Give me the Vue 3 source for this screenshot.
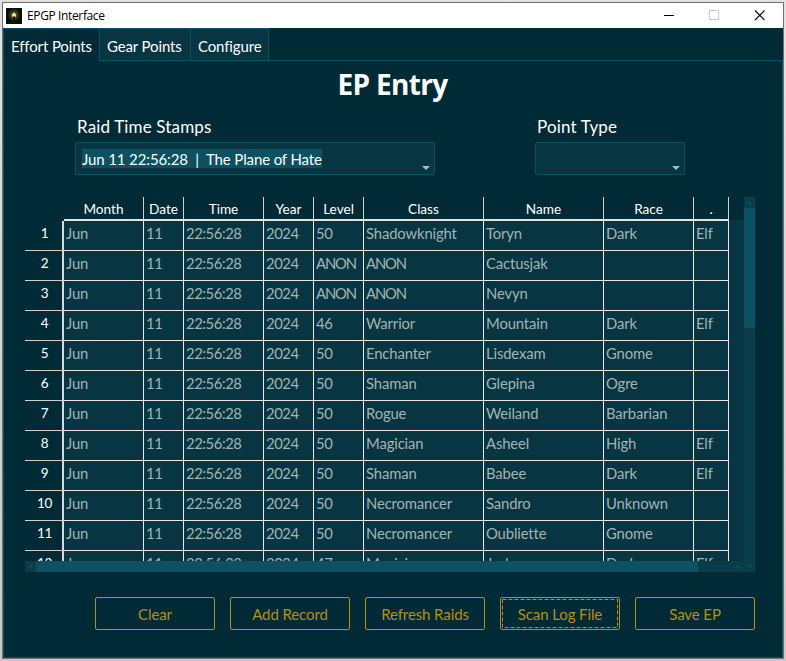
<script setup>
const tabs = [
  { label: 'Effort Points', cls: 'effort' },
  { label: 'Gear Points', cls: 'gear' },
  { label: 'Configure', cls: 'configure' },
]
const columns = ['Month', 'Date', 'Time', 'Year', 'Level', 'Class', 'Name', 'Race', '.']
const members = [
  ['50', 'Shadowknight', 'Toryn', 'Dark', 'Elf'],
  ['ANON', 'ANON', 'Cactusjak', '', ''],
  ['ANON', 'ANON', 'Nevyn', '', ''],
  ['46', 'Warrior', 'Mountain', 'Dark', 'Elf'],
  ['50', 'Enchanter', 'Lisdexam', 'Gnome', ''],
  ['50', 'Shaman', 'Glepina', 'Ogre', ''],
  ['50', 'Rogue', 'Weiland', 'Barbarian', ''],
  ['50', 'Magician', 'Asheel', 'High', 'Elf'],
  ['50', 'Shaman', 'Babee', 'Dark', 'Elf'],
  ['50', 'Necromancer', 'Sandro', 'Unknown', ''],
  ['50', 'Necromancer', 'Oubliette', 'Gnome', ''],
  ['47', 'Magician', 'Jasker', 'Dark', 'Elf'],
]
const rows = members.map((m) => ['Jun', '11', '22:56:28', '2024', ...m])
const actions = ['Clear', 'Add Record', 'Refresh Raids', 'Scan Log File', 'Save EP']
const spacing = (v) => ({ anon: v === 'ANON', digits: /^\d/.test(v) })
</script>

<template>
  <div class="desktop">
    <div class="window">
      <header class="titlebar">
        <svg class="app-icon" width="16" height="16" viewBox="0 0 16 16">
          <defs>
            <radialGradient id="glow">
              <stop offset="0" stop-color="#d09a38" />
              <stop offset=".45" stop-color="#4e4312" />
              <stop offset="1" stop-color="#06140f" />
            </radialGradient>
          </defs>
          <rect width="16" height="16" fill="#03100f" />
          <ellipse cx="8" cy="7" rx="6" ry="6.5" fill="url(#glow)" />
          <path d="M6 9V6.5L8 4.5l2 2V9L8 7.5z" fill="#ffe0a0" />
          <path d="M7.3 9h1.4l.8 6h-3z" fill="#171108" />
        </svg>
        <span class="caption">EPGP Interface</span>
        <svg class="controls" width="103" height="11" viewBox="0 0 103 11" shape-rendering="crispEdges">
          <path d="M0 5.5h10" stroke="#000" />
          <rect x="45.5" y=".5" width="9" height="9" fill="none" stroke="#ccc" />
          <path d="M91 .5l9.5 9.5M100.5 .5L91 10" stroke="#000" stroke-width="1.1" shape-rendering="auto" />
        </svg>
      </header>

      <nav class="tabs">
        <div v-for="t in tabs" :key="t.label" class="tab" :class="t.cls"><span>{{ t.label }}</span></div>
        <div class="tab-rest"></div>
      </nav>

      <main class="pane">
        <h1>EP Entry</h1>
        <div class="fields">
          <div class="field raid">
            <label>Raid Time Stamps</label>
            <div class="combo">
              <span class="selected">Jun 11 22:56:28&nbsp; |&nbsp; The Plane of Hate</span>
              <svg class="arrow" width="8" height="4" viewBox="0 0 8 4"><path d="M0 0h8L4 4z" /></svg>
            </div>
          </div>
          <div class="field type">
            <label>Point Type</label>
            <div class="combo">
              <svg class="arrow" width="8" height="4" viewBox="0 0 8 4"><path d="M0 0h8L4 4z" /></svg>
            </div>
          </div>
        </div>

        <section class="sheet">
          <div class="view">
            <div class="row head">
              <div class="index"></div>
              <div v-for="c in columns" :key="c" class="cell">{{ c }}</div>
            </div>
            <div class="body">
              <div v-for="(r, i) in rows" :key="i" class="row">
                <div class="index">{{ i + 1 }}</div>
                <div v-for="(v, j) in r" :key="j" class="cell" :class="spacing(v)">{{ v }}</div>
              </div>
            </div>
          </div>
          <div class="vbar">
            <div class="step"><svg width="5" height="3" viewBox="0 0 5 3"><path d="M0 3h5L2.5 0z" /></svg></div>
            <div class="thumb"></div>
          </div>
          <div class="hbar">
            <div class="step"><svg width="3" height="5" viewBox="0 0 3 5"><path d="M3 0v5L0 2.5z" /></svg></div>
            <div class="thumb"></div>
            <div class="step end"><svg width="3" height="5" viewBox="0 0 3 5"><path d="M0 0v5l3-2.5z" /></svg></div>
          </div>
          <div class="step corner"><svg width="6" height="3" viewBox="0 0 6 3"><path d="M0 0h6L3 3z" /></svg></div>
        </section>

        <div class="actions">
          <button v-for="a in actions" :key="a">
            {{ a }}
            <svg v-if="a === 'Scan Log File'" class="focus" width="116" height="29" viewBox="0 0 116 29">
              <rect x=".5" y=".5" width="115" height="28" />
            </svg>
          </button>
        </div>
      </main>
    </div>
  </div>
</template>

<style>
body { margin: 0; background: #d6d6d6; }
</style>

<style scoped>
* { box-sizing: border-box; }
.desktop {
  width: 786px; height: 661px; padding: 2px; overflow: hidden;
  background: linear-gradient(#e2e2e2, #c8c8c8);
  font-family: Lato, "Liberation Sans", sans-serif; font-size: 15px; color: #fff;
}
.window { width: 782px; height: 657px; border: 1px solid #6f6f6f; background: #002b36; display: flex; flex-direction: column; }
.titlebar { height: 25px; background: #fff; display: flex; align-items: center; padding-left: 3px; flex: none; }
.caption { margin-left: 5px; color: #000; font: 12px/16px "Open Sans", sans-serif; letter-spacing: -.37px; }
.controls { margin-left: auto; margin-right: 16px; }
.tabs { display: flex; height: 33px; flex: none; }
.tab { border: 1px solid #0b5162; border-left-width: 0; background: #073642; padding-left: 7px; line-height: 34px; white-space: nowrap; letter-spacing: -.13px; }
.effort { width: 97px; border-left-width: 1px; border-bottom: 0; background: #002b36; }
.gear { width: 91px; }
.configure { width: 78px; }
.tab-rest { flex: 1; border-bottom: 1px solid #0b5162; }
.pane { flex: 1; border: 1px solid #0b5162; border-top: 0; padding: 0 27px 0 21px; }
h1 { margin: 0; height: 56px; padding-left: 5px; font: bold 28px/47px "Open Sans", sans-serif; letter-spacing: -.7px; text-align: center; }
.fields { display: flex; gap: 100px; padding-left: 50px; }
.field label { display: block; height: 25px; line-height: 20px; padding-left: 2px; font-size: 17px; letter-spacing: .15px; white-space: nowrap; }
.combo { height: 33px; border: 1px solid #0b5162; border-radius: 2px; background: #073642; position: relative; padding: 6px; display: flex; }
.raid { width: 360px; }
.type { width: 150px; }
.selected { height: 19px; line-height: 20px; background: #0b5162; width: 240px; white-space: nowrap; letter-spacing: -.12px; }
.arrow { position: absolute; right: 4px; bottom: 4px; fill: #a9bdbd; }
.sheet { margin-top: 22px; display: grid; grid-template-columns: 719px 11px; grid-template-rows: 364px 11px; }
.view { overflow: hidden; background: #073642; }
.row { display: grid; grid-template-columns: 39px 80px 40px 80px 50px 50px 120px 120px 90px 35px; grid-template-rows: 30px; height: 30px; }
.head { height: 24px; grid-template-rows: 24px; background: linear-gradient(#002b36 23px, #073642 23px); }
.cell { height: 30px; border-right: 1px solid #e8e8e8; border-bottom: 1px solid #e8e8e8; padding-left: 2px; color: #a3b4b3; font-size: 14.8px; line-height: 24px; letter-spacing: -.12px; white-space: nowrap; }
.digits { letter-spacing: -.42px; }
.anon { letter-spacing: -1.1px; }
.head .cell { height: 24px; text-align: center; line-height: 24px; padding: 0; border-right: 1px solid #d0d0d0; border-bottom: 2px solid #e4e4e4; color: #fff; font-size: 13.6px; letter-spacing: 0; }
.index { background: #002b36; color: #fff; text-align: center; font-size: 13.5px; line-height: 24px; letter-spacing: -.3px; padding-left: 2px; border-right: 2px solid #dadada; border-bottom: 1px solid #d0d0d0; }
.head .index { border: 0; }
.vbar, .hbar, .corner { background: #083d49; }
.vbar .thumb { height: 120px; background: #0b5162; }
.hbar { display: flex; }
.hbar .thumb { width: 662px; background: #0b5162; }
.step { width: 11px; height: 11px; display: flex; align-items: center; justify-content: center; }
.step svg { fill: #0b5162; }
.end { margin-left: auto; }
.actions { display: flex; gap: 15px; margin-top: 25px; justify-content: flex-end; }
button { width: 120px; height: 33px; padding: 0; background: #002b36; border: 1px solid #b58f18; border-radius: 2px; color: #b58f18; font: inherit; letter-spacing: -.1px; position: relative; white-space: nowrap; }
.focus { position: absolute; left: 1px; top: 1px; fill: none; stroke: #b58f18; stroke-dasharray: 4 2; }
</style>
